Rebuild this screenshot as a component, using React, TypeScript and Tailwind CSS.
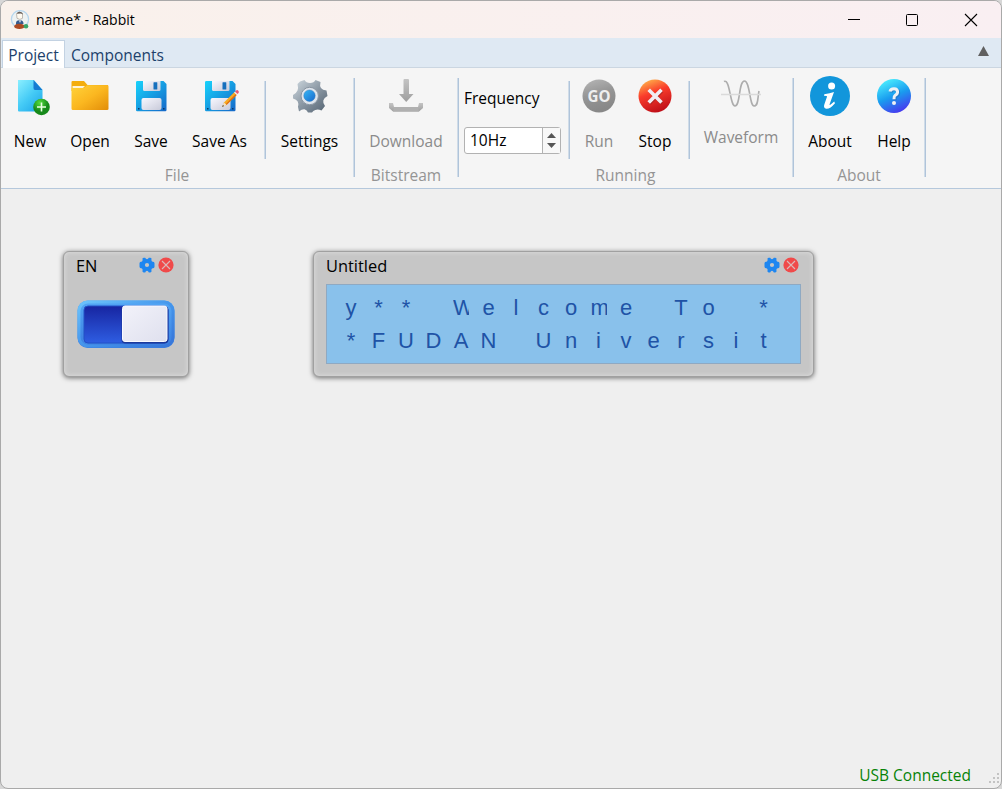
import React from "react";

function RabbitLogo() {
  return (
    <svg width="20" height="20" viewBox="0 0 20 20">
      <circle cx="10" cy="9.2" r="8.6" fill="#eef2f2" stroke="#b5d6ee" strokeWidth="1.3" />
      <path d="M6.5 3.5 Q9.5 1 12.5 3.5 L12.5 8.3 Q10 10.5 7 8.3Z" fill="#fffaf0" stroke="#a8a098" strokeWidth=".7" />
      <path d="M6.8 3.8 Q7.5 1.6 9.5 1.8 Q12.6 1.8 12.8 4.6 L11 3.4Z" fill="#6e625b" />
      <path d="M6 13.2 Q6 10 10 10.3 Q13.5 10.1 13.5 14 L6 15Z" fill="#365b8d" />
      <path d="M9 10.5 L11 10.5 L10 13Z" fill="#f5f5f5" />
      <ellipse cx="9.4" cy="16.4" rx="5.2" ry="2.7" fill="#ad4b23" />
      <circle cx="16" cy="16.3" r="2.3" fill="#38a568" />
    </svg>
  );
}

function NewIcon() {
  return (
    <svg width="40" height="40" viewBox="0 0 40 40">
      <defs>
        <linearGradient id="page" x1="0" y1="0" x2=".8" y2="1">
          <stop stopColor="#8befff" /><stop offset=".55" stopColor="#45cbf6" /><stop offset="1" stopColor="#22a9ea" />
        </linearGradient>
        <radialGradient id="plus" cx=".4" cy=".25"><stop stopColor="#55dc3f" /><stop offset="1" stopColor="#16891a" /></radialGradient>
      </defs>
      <path d="M8 4 H24 L32.5 14 V34 Q32.5 35.5 31 35.5 H9 Q8 35.5 8 34.5Z" fill="url(#page)" />
      <path d="M23.5 4 L32.5 14 H25 Q23.5 14 23.5 12Z" fill="#147bd1" />
      <circle cx="31.5" cy="31" r="8.3" fill="url(#plus)" />
      <path d="M31.5 26.5 V35.5 M27 31 H36" stroke="#e9ffe3" strokeWidth="1.6" />
    </svg>
  );
}

function FolderIcon() {
  return (
    <svg width="40" height="40" viewBox="0 0 40 40">
      <defs><linearGradient id="folder" x1="0" y1="0" x2="1" y2="1"><stop stopColor="#ffd33a" /><stop offset=".5" stopColor="#fbb720" /><stop offset="1" stopColor="#e28d08" /></linearGradient></defs>
      <path d="M1.5 6 Q1.5 5 2.5 5 H14 L17.5 9 H38 V15 H1.5Z" fill="#f4ad0d" />
      <path d="M2.5 10 H15 L13 12 H2.5Z" fill="#fff4d6" />
      <path d="M1.5 12 H14 L17 9.3 H37.5 Q38.5 9.3 38.5 10.5 V33 Q38.5 34 37 34 H3 Q1.5 34 1.5 32.5Z" fill="url(#folder)" />
    </svg>
  );
}

function SaveIcon({ pencil = false }: { pencil?: boolean }) {
  return (
    <svg width="40" height="40" viewBox="0 0 40 40">
      <defs>
        <linearGradient id="disk" x1="0" y1="0" x2="1" y2="1"><stop stopColor="#18d3fc" /><stop offset="1" stopColor="#1467c8" /></linearGradient>
        <linearGradient id="paper" x1="0" y1="0" x2="1" y2="1"><stop stopColor="#f8f8ff" /><stop offset="1" stopColor="#c8cad9" /></linearGradient>
      </defs>
      <path d="M6.5 5 H32.5 L35.5 8 V34 Q35.5 35.2 34.3 35.2 H6.2 Q5 35.2 5 34 V6 Q5 5 6.5 5Z" fill="url(#disk)" />
      <path d="M12 5 H29.5 V13.5 Q29.5 15 28 15 H13.5 Q12 15 12 13.5Z" fill="url(#paper)" />
      <rect x="22.5" y="6.3" width="3.8" height="7.2" rx=".5" fill="#156fbd" />
      <path d="M10.5 32 V24 Q10.5 22 12.5 22 H28.5 Q30.5 22 30.5 24 V32 Q30.5 34 28.5 34 H12.5 Q10.5 34 10.5 32Z" fill="url(#paper)" />
      <rect x="7" y="32" width="1.5" height="1.5" fill="#093766" /><rect x="32" y="32" width="1.5" height="1.5" fill="#093766" />
      {pencil && (
        <g>
          <path d="M22 31 L24 26.5 L34.5 16 L37 18.5 L26.5 29Z" fill="#f8aa22" />
          <path d="M25.8 28 L36 17.8 L37 18.8 L26.5 29Z" fill="#de6b12" />
          <path d="M24 26.5 L22 31 L26.5 29Z" fill="#eee1d0" /><path d="M22 31 L23 29 L24 30Z" fill="#333" />
          <path d="M34 16.5 L35 15.5 L37.5 18 L36.5 19Z" fill="#eee" />
          <path d="M35 15.5 L36.5 14.2 Q37.5 13.5 38.5 15 Q39.3 16 38.5 17 L37.5 18Z" fill="#e85973" />
        </g>
      )}
    </svg>
  );
}

function SettingsIcon() {
  return (
    <svg width="40" height="40" viewBox="0 0 40 40">
      <defs>
        <linearGradient id="steel" x1="0" y1="0" x2="1" y2="1"><stop stopColor="#d0dae1" /><stop offset=".5" stopColor="#8b98a4" /><stop offset="1" stopColor="#526170" /></linearGradient>
        <linearGradient id="hub" x1="0" y1="0" x2="1" y2="1"><stop stopColor="#37b8f6" /><stop offset="1" stopColor="#1768cc" /></linearGradient>
      </defs>
      <path d="M14.5 4 Q16 7 20 7 Q24 7 25.5 4 L30.5 6 Q29.5 10 31 12 Q32.5 14 36.5 14.5 L37.5 20 Q34 21.5 33.3 24.5 Q32.7 27.5 35 30 L31.5 34.5 Q28 33 25.3 34 Q23 34.5 22 36.5 L18 36.5 Q17 34 14.5 33.3 Q12 33 9 35.5 L8 31 Q9 28 7.7 25.5 Q6.5 23.5 3 22.5 L3 19 Q6.5 17 7.5 14.5 Q8.5 12 7.5 8 L10 5.5Z" fill="url(#steel)" />
      <circle cx="19.7" cy="20" r="8.7" fill="#dfe5ec" stroke="#8995a2" strokeWidth="1" />
      <circle cx="19.5" cy="19.7" r="5.7" fill="url(#hub)" stroke="#2f78bd" strokeWidth=".5" />
    </svg>
  );
}

function DownloadIcon() {
  return (
    <svg width="40" height="40" viewBox="0 0 40 40">
      <defs><linearGradient id="tray" x1="0" y1="0" x2="0" y2="1"><stop stopColor="#c4c4c4" /><stop offset="1" stopColor="#9e9e9e" /></linearGradient></defs>
      <path d="M17.5 4 Q17.5 3 18.5 3 H22 Q23 3 23 4 V18 H27.5 L20.2 26 L13 18 H17.5Z" fill="url(#tray)" />
      <path d="M3 27 H7 L8 31 H32 L33 27 H37 V32 L33 35.5 H7 L3 32Z" fill="url(#tray)" />
      <path d="M8 31 H32 L33 35.5 H7Z" fill="#b0b0b0" />
    </svg>
  );
}

function RoundIcon({ kind }: { kind: "go" | "stop" | "help" }) {
  return (
    <svg width="40" height="40" viewBox="0 0 40 40">
      <defs>
        <linearGradient id="go" x1="0" y1="0" x2=".3" y2="1"><stop stopColor="#b7b7b7" /><stop offset=".5" stopColor="#969696" /><stop offset="1" stopColor="#888" /></linearGradient>
        <linearGradient id="stop" x1=".25" y1="0" x2=".65" y2="1"><stop stopColor="#ffb24a" /><stop offset=".4" stopColor="#fa3c2b" /><stop offset="1" stopColor="#bc0c17" /></linearGradient>
        <linearGradient id="help" x1=".25" y1="0" x2=".7" y2="1"><stop stopColor="#4df1ff" /><stop offset=".5" stopColor="#199cef" /><stop offset="1" stopColor="#4932ef" /></linearGradient>
      </defs>
      {kind === "go" && <><circle cx="20" cy="20" r="16.5" fill="url(#go)" /><text x="20" y="25.5" textAnchor="middle" fontFamily="Open Sans, sans-serif" fontWeight="700" fontSize="16" textLength="23" lengthAdjust="spacingAndGlyphs" fill="#efefef">GO</text></>}
      {kind === "stop" && <><circle cx="20" cy="20" r="16.5" fill="url(#stop)" /><path d="M14 14 L26.5 26.5 M26.5 14 L14 26.5" stroke="#8d2525" strokeWidth="3.4" transform="translate(.7 1)" opacity=".5" /><path d="M13.7 13.7 L26.5 26.5 M26.5 13.7 L13.7 26.5" stroke="#f1edf3" strokeWidth="3.6" /></>}
      {kind === "help" && <><circle cx="20" cy="20" r="17" fill="url(#help)" /><path d="M16 15.5 Q16.5 12.7 20 12.7 Q23.6 12.7 23.6 16 Q23.6 18 21 19.5 Q20 20.2 20 23.2" fill="none" stroke="#286bb3" strokeWidth="3.2" transform="translate(1 1)" opacity=".6" /><path d="M16 15.5 Q16.5 12.7 20 12.7 Q23.6 12.7 23.6 16 Q23.6 18 21 19.5 Q20 20.2 20 23.2" fill="none" stroke="#eef1f5" strokeWidth="3" /><circle cx="20" cy="27" r="2" fill="#eef1f5" /></>}
    </svg>
  );
}

function AboutIcon() {
  return (
    <svg width="40" height="40" viewBox="0 0 40 40">
      <circle cx="20" cy="20" r="20" fill="#1296db" />
      <circle cx="21.6" cy="10.1" r="3.5" fill="#fff" />
      <path d="M14.3 18.2 Q20 17.3 24 16 L19.6 28.2 Q19.3 29.5 21 28.3 L24.2 25.5 L25 27.3 Q20 33.2 16.3 32.8 Q13 32 14.4 28.2 L17 20.7 Q17.3 19.7 14 19.7Z" fill="#fff" />
    </svg>
  );
}

function WaveIcon() {
  return (
    <svg width="40" height="40" viewBox="0 0 40 40">
      <path d="M3 6.5 C9 3 9 31 14 31 C19.5 31 17.5 6 23.5 6 C29 6 28.5 31 33 31 C37.5 31 36.5 23 38 16" fill="none" stroke="#adadad" strokeWidth="1.6" />
      <path d="M0 19.5 H40" stroke="#dadada" strokeWidth="1.6" />
    </svg>
  );
}

function Tool({ icon, text, width, disabled = false }: { icon: React.ReactNode; text: string; width: string; disabled?: boolean }) {
  return (
    <button className={`flex shrink-0 flex-col items-center pt-2 ${width} ${disabled ? "text-[#8b8b8b]" : "text-black"}`}>
      <span className="block h-10">{icon}</span>
      <span className="mt-[13px] leading-6 whitespace-nowrap">{text}</span>
    </button>
  );
}

function GroupLabel({ text }: { text: string }) {
  return <div className="text-center leading-6 text-[#949494]">{text}</div>;
}

function LongLine() {
  return <div className="mt-[10px] h-[99px] w-[2px] shrink-0 border-r border-[#b0c4da] bg-[#d0dce8]" />;
}

function ShortLine() {
  return <div className="mt-[13px] -ml-px h-[78px] w-[2px] shrink-0 border-r border-[#b0c4da] bg-[#d0dce8]" />;
}

function CardIcons() {
  return (
    <div className="flex gap-[3px]">
      <svg width="16" height="16" viewBox="0 0 16 16">
        <path fillRule="evenodd" fill="#1e86f0" d="M4.6 .8 L6.2 .8 Q6.8 2.2 8 2.2 Q9.2 2.2 9.8 .8 L11.4 .8 L12.6 1.6 Q12 3.3 12.8 4.2 Q13.5 5 15 5 L15.5 6.2 V9.8 L15 11 Q13.5 11 12.8 11.8 Q12 12.7 12.6 14.4 L11.4 15.4 L9.8 15.4 Q9.2 13.8 8 13.8 Q6.8 13.8 6.2 15.4 L4.6 15.4 L3.4 14.4 Q4 12.7 3.2 11.8 Q2.5 11 1 11 L.5 9.8 V6.2 L1 5 Q2.5 5 3.2 4.2 Q4 3.3 3.4 1.6Z M10.1 8 A2.1 2.1 0 1 0 5.9 8 A2.1 2.1 0 1 0 10.1 8Z" />
      </svg>
      <svg width="16" height="16" viewBox="0 0 16 16"><circle cx="8" cy="8" r="7.6" fill="#f04a4a" /><path d="M4 4 L12 12 M12 4 L4 12" stroke="#dbbaba" strokeWidth="1.1" /></svg>
    </div>
  );
}

function Card({ title, width, children }: { title: string; width: string; children: React.ReactNode }) {
  return (
    <section className={`h-[126px] rounded-[6px] border border-[#a0a0a0] bg-[#c6c6c6] px-3 shadow-[0_1px_5px_rgba(0,0,0,0.55),inset_0_0_5px_#dedede] ${width}`}>
      <header className="flex h-8 justify-between pt-[5px] pr-[2px]"><span className="text-[16.4px] leading-[18px]">{title}</span><CardIcons /></header>
      {children}
    </section>
  );
}

function LcdRow({ text }: { text: string }) {
  return (
    <div className="flex h-[33px] pl-[16px]">
      {text.split("").map((c, i) => (
        <span key={i} className="flex w-[27.5px] shrink-0">
          <span className="flex w-4 shrink-0 justify-center overflow-hidden"><span className={c === "W" || c === "m" ? "w-4" : ""}>{c}</span></span>
        </span>
      ))}
    </div>
  );
}

function ToggleSwitch() {
  return (
    <svg className="mt-[16px] ml-px" width="98" height="49" viewBox="0 0 98 49">
      <defs>
        <linearGradient id="rim" x1="0" y1="0" x2="1" y2="1"><stop stopColor="#6cc4fc" /><stop offset=".5" stopColor="#4596ec" /><stop offset="1" stopColor="#3775d9" /></linearGradient>
        <linearGradient id="rimBase" x1="0" y1="0" x2="0" y2="1"><stop stopColor="#53a7f5" /><stop offset="1" stopColor="#3b7ee0" /></linearGradient>
        <linearGradient id="well" x1="0" y1="0" x2="0" y2="1"><stop stopColor="#1725a1" /><stop offset="1" stopColor="#2e5de2" /></linearGradient>
        <linearGradient id="knob" x1="0" y1="0" x2="1" y2="1"><stop stopColor="#f2f2fa" /><stop offset="1" stopColor="#dfe0ee" /></linearGradient>
      </defs>
      <rect x=".5" y=".5" width="97" height="47.5" rx="10" fill="url(#rimBase)" />
      <rect x="2" y="2" width="94" height="44" rx="9" fill="none" stroke="url(#rim)" strokeWidth="3" />
      <rect x="7" y="6" width="84" height="37" rx="4" fill="url(#well)" stroke="#2350c6" />
      <rect x="44.5" y="6.5" width="47" height="37" rx="4" fill="#1b399c" />
      <rect x="45.5" y="6" width="44.5" height="35.5" rx="2.5" fill="url(#knob)" stroke="#fafaff" />
    </svg>
  );
}

export default function App() {
  return (
    <div className="h-[789px] w-[1002px] overflow-hidden bg-[#d7d7d7] font-['Open_Sans','Noto_Sans',sans-serif] text-[15.5px] text-black">
      <main className="flex h-full w-full flex-col overflow-hidden rounded-lg border border-[#a9a9a9] bg-[#efefef]">
        <header className="flex h-[37px] shrink-0 items-center bg-linear-to-r from-[#f9f1eb] to-[#f9eff2] pl-[9px]">
          <RabbitLogo />
          <h1 className="ml-[6px] text-[14px] leading-5">name* - Rabbit</h1>
          <div className="ml-auto flex items-center gap-[45px] pr-[23px]">
            <svg width="14" height="14" viewBox="0 0 14 14"><path d="M2 6.5 H14" stroke="#000" /></svg>
            <svg width="14" height="14" viewBox="0 0 14 14"><rect x="1.5" y="1.5" width="11" height="11" rx="1" fill="none" stroke="#000" /></svg>
            <svg width="14" height="14" viewBox="0 0 14 14"><path d="M1 1 L13 13 M13 1 L1 13" stroke="#000" strokeWidth="1.1" /></svg>
          </div>
        </header>
        <nav className="flex h-[30px] shrink-0 items-end border-b border-[#cbd6e1] bg-[#dfe9f3] text-[#1c416b]">
          <div className="-mb-px ml-px flex h-[28px] w-[63px] items-center justify-center border border-b-0 border-[#c3d2e2] bg-white pt-[2px]">Project</div>
          <div className="ml-[6px] leading-[23px]">Components</div>
          <svg className="mr-[12px] mb-[11px] ml-auto" width="11" height="10" viewBox="0 0 11 10"><path d="M5.5 0 L11 10 H0Z" fill="#606060" /></svg>
        </nav>
        <div className="flex h-[121px] shrink-0 border-b border-[#b5c8dc] bg-[#f5f5f5]">
          <section className="w-[352px] shrink-0">
            <div className="flex h-[95px]">
              <Tool width="w-[58px]" text="New" icon={<NewIcon />} />
              <Tool width="w-[62px]" text="Open" icon={<FolderIcon />} />
              <Tool width="w-[60px]" text="Save" icon={<SaveIcon />} />
              <Tool width="w-[77px]" text="Save As" icon={<SaveIcon pencil />} />
              <div className="w-[7px]" /><ShortLine />
              <Tool width="w-[87px]" text="Settings" icon={<SettingsIcon />} />
            </div>
            <GroupLabel text="File" />
          </section>
          <LongLine />
          <section className="w-[102px] shrink-0">
            <div className="h-[95px]"><Tool width="w-[102px]" text="Download" icon={<DownloadIcon />} disabled /></div>
            <GroupLabel text="Bitstream" />
          </section>
          <LongLine />
          <section className="w-[333px] shrink-0">
            <div className="flex h-[95px]">
              <div className="w-[110px] shrink-0 pt-[18px] pl-[5px]">
                <div className="leading-6">Frequency</div>
                <div className="mt-[17px] flex h-[27px] w-[97px] rounded-[3px] border border-[#b2b2b2] bg-white">
                  <span className="flex-1 pl-[5px] leading-[25px]">10Hz</span>
                  <span className="flex w-[18px] flex-col items-center justify-center gap-[5px] border-l border-[#b2b2b2] bg-[#f8f8f8]">
                    <svg width="9" height="5" viewBox="0 0 9 5"><path d="M4.5 0 L9 5 H0Z" fill="#555" /></svg>
                    <svg width="9" height="5" viewBox="0 0 9 5"><path d="M0 0 H9 L4.5 5Z" fill="#555" /></svg>
                  </span>
                </div>
              </div>
              <ShortLine />
              <Tool width="w-[58px]" text="Run" icon={<RoundIcon kind="go" />} disabled />
              <Tool width="w-[54px]" text="Stop" icon={<RoundIcon kind="stop" />} />
              <div className="w-[7px]" /><ShortLine />
              <div className="flex w-[102px] flex-col items-center pt-[7px] text-[#8b8b8b]">
                <WaveIcon />
                <span className="mt-[10px] leading-6">Waveform</span>
              </div>
            </div>
            <GroupLabel text="Running" />
          </section>
          <LongLine />
          <section className="w-[130px] shrink-0">
            <div className="flex h-[95px]">
              <Tool width="w-[72px]" text="About" icon={<AboutIcon />} />
              <Tool width="w-[56px]" text="Help" icon={<RoundIcon kind="help" />} />
            </div>
            <GroupLabel text="About" />
          </section>
          <LongLine />
        </div>
        <div className="flex flex-1 items-start gap-[124px] pt-[62px] pl-[62px]">
          <Card title="EN" width="w-[126px]"><ToggleSwitch /></Card>
          <Card title="Untitled" width="w-[501px]">
            <div className="h-[80px] w-[475px] overflow-hidden border border-[#8fa9c2] bg-[#89c1eb] pt-[6px] font-['Liberation_Sans',sans-serif] text-[22px] leading-[33px] text-[#2053a6]">
              <LcdRow text="y** Welcome To *" />
              <LcdRow text="*FUDAN Universit" />
            </div>
          </Card>
        </div>
        <footer className="flex h-[25px] shrink-0 justify-end">
          <span className="mr-[18px] leading-6 text-[#078307]">USB Connected</span>
          <svg className="mt-[9px] -ml-[3px]" width="15" height="14" viewBox="0 0 15 14">
            <path d="M11 1h2v2h-2z M7 5h2v2h-2z M11 5h2v2h-2z M3 9h2v2h-2z M7 9h2v2h-2z M11 9h2v2h-2z" fill="#c3c3c3" />
          </svg>
        </footer>
      </main>
    </div>
  );
}
